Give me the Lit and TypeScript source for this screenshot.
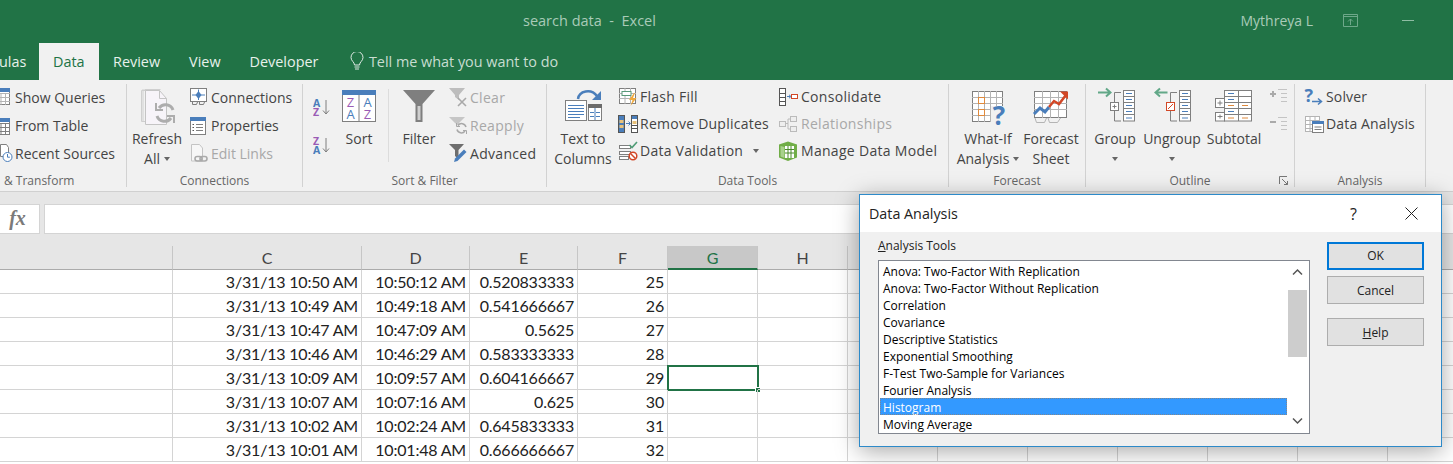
/**
 * Excel 2016 window, Data tab, with the Data Analysis dialog open
 */

import { LitElement, html, svg, css, TemplateResult, SVGTemplateResult } from 'lit'
import { customElement } from 'lit/decorators.js'

const GREY = '#7f7f7f'
const LIGHT = '#b4b4b4'
const BLUE = '#4a7ebb'
const ORANGE = '#e08a3c'
const RED = '#d24726'
const PURPLE = '#9a5bb5'

const ic = (body: SVGTemplateResult, w = 20, h = 20) =>
  html`<svg width=${w} height=${h} viewBox="0 0 ${w} ${h}" fill="none">${body}</svg>`

// small ribbon icons, 20x20
const icons: Record<string, TemplateResult> = {
  showQueries: ic(svg`<rect x="3.5" y="1.5" width="13" height="16" fill="#fff" stroke=${GREY}/><path d="M3 6.5h14M3 10.5h14M3 14.5h14M8 6v12M12.5 6v12" stroke=${LIGHT}/><rect x="3" y="1" width="14" height="4" fill=${BLUE}/>`),
  fromTable: ic(svg`<rect x="3.5" y="3.5" width="13" height="16" fill="#fff" stroke=${GREY}/><path d="M3 8.5h14M3 12.5h14M3 16.5h14M8 8v12M12.5 8v12" stroke=${GREY}/><rect x="3" y="3" width="14" height="4" fill=${BLUE}/>`),
  recentSources: ic(svg`<path d="M7.5 1.5h6l2 3v9h-8z" fill="#fff" stroke=${GREY}/><circle cx="14.5" cy="14" r="4.5" fill="#fff" stroke=${BLUE}/><path d="M14.5 11v3.2h2.4" stroke=${BLUE}/>`),
  connections: ic(svg`<rect x="1.5" y="1.5" width="16" height="13" fill="#fff" stroke=${GREY}/><path d="M9.5 4l3 4-3 4-3-4z" fill=${BLUE}/><path d="M9.5 2.5v3M9.5 10v3M3 8h4M12 8h4" stroke=${BLUE}/><path d="M3.5 15v2.5h4l1-2.5M10.5 15v2.5h4l1-2.5" stroke=${GREY}/>`),
  properties: ic(svg`<rect x="1.5" y="2.5" width="15" height="17" fill="#fff" stroke=${GREY}/><rect x="1" y="2" width="16" height="4" fill=${BLUE}/><path d="M7 9.5h7M7 12.5h7M7 15.5h7" stroke=${GREY}/><path d="M3.5 9.5h1.5M3.5 12.5h1.5M3.5 15.5h1.5" stroke="#555"/>`),
  editLinks: ic(svg`<path d="M2.5 1.5h8l3 3.5v13h-11z" fill="#f7f7f7" stroke="#c4c4c4"/><rect x="6" y="13.5" width="7" height="4.5" rx="2.2" stroke="#aaa" stroke-width="1.6"/><rect x="11" y="13.5" width="7" height="4.5" rx="2.2" stroke="#aaa" stroke-width="1.6"/>`),
  az: ic(svg`<text x="0" y="9.5" class="ict" fill=${BLUE}>A</text><text x="0" y="19" class="ict" fill=${PURPLE}>Z</text><path d="M13 3v14M10 13.5l3 3.5 3-3.5" stroke=${GREY}/>`),
  za: ic(svg`<text x="0" y="9.5" class="ict" fill=${PURPLE}>Z</text><text x="0" y="19" class="ict" fill=${BLUE}>A</text><path d="M13 3v14M10 13.5l3 3.5 3-3.5" stroke=${GREY}/>`),
  clear: ic(svg`<path d="M1 1h16l-6 7v5l-4-3V8z" fill="#bdbdbd"/><path d="M10 11l8 8M18 11l-8 8" stroke="#a8a8a8" stroke-width="1.6"/>`),
  reapply: ic(svg`<path d="M1 2h16l-6 6v3l-4-3V8z" fill="#c6c6c6"/><path d="M18 12a4.5 4.5 0 0 0-8-1.5M9 14.5a4.5 4.5 0 0 0 8 1.5" stroke="#a8a8a8" stroke-width="1.5"/><path d="M8.5 8v3.5H12M18.5 19v-3.5H15" stroke="#a8a8a8"/>`),
  advanced: ic(svg`<path d="M1 1h15l-5.5 6v9L7 13V7z" fill="#6e6e6e"/><path d="M6 19l1-3.5 9-9 2.5 2.5-9 9z" fill=${BLUE}/>`),
  flashFill: ic(svg`<rect x="1.5" y="1.5" width="16" height="15" fill="#fff" stroke=${GREY}/><path d="M1 6.5h17M1 11.5h17M7 1v16M12.5 1v16" stroke=${LIGHT}/><rect x="4" y="4.5" width="9" height="4" fill="#fff" stroke="#5a9a78"/><path d="M16 6l-5 7h3.5l-2 6 6-8h-3.5l2-5z" fill="#f0a93c"/>`),
  removeDup: ic(svg`<rect x="0.5" y="1.5" width="6" height="17" fill=${BLUE} stroke="#555"/><rect x="1.5" y="6" width="4" height="3" fill="#e8c17a"/><rect x="1.5" y="11" width="4" height="3" fill="#e8c17a"/><rect x="13.5" y="1.5" width="6" height="17" fill="#fff" stroke="#555"/><rect x="14" y="2" width="5" height="3" fill=${BLUE}/><rect x="14.5" y="7" width="4" height="3" fill="#e8c17a"/><path d="M14 11.5h5M14 14.5h5" stroke="#555"/><path d="M8 9.5h4M10.5 7.5l2 2-2 2" stroke=${BLUE}/>`),
  validation: ic(svg`<rect x="1.5" y="4.5" width="11" height="3" fill="#fff" stroke=${GREY}/><rect x="1.5" y="10.5" width="11" height="3" fill="#fff" stroke=${GREY}/><rect x="1.5" y="15.5" width="9" height="3" fill="#fff" stroke=${GREY}/><path d="M11.5 4l2.5 2.5 5-5.5" stroke="#4f9c76" stroke-width="1.6"/><circle cx="15" cy="15" r="3.8" fill="#fff" stroke=${RED} stroke-width="1.5"/><path d="M12.5 12.5l5 5" stroke=${RED} stroke-width="1.5"/>`),
  consolidate: ic(svg`<rect x="1.5" y="1.5" width="6" height="17" fill="#fff" stroke="#555"/><path d="M2 6.5h5M2 10.5h5M2 14.5h5" stroke="#555"/><path d="M9 9.5h3M11 7.8l2 1.7-2 1.7" stroke=${BLUE}/><rect x="13.5" y="7.5" width="6" height="4" fill="#fff" stroke=${RED}/>`),
  relationships: ic(svg`<rect x="1.5" y="7.5" width="6" height="5" fill="#eee" stroke="#bbb"/><rect x="12.5" y="2.5" width="6" height="5" fill="#eee" stroke="#bbb"/><rect x="12.5" y="12.5" width="6" height="5" fill="#eee" stroke="#bbb"/><path d="M7 9.5h3V5h3M10 9.5V15h3" stroke="#bbb"/>`),
  dataModel: ic(svg`<path d="M10 0.5l9 3v13l-9 3.5-9-3.5v-13z" fill="#70ad47"/><path d="M7 5h9v12H7z" fill="#fff"/><path d="M7 8.5h9M7 12h9M10 5v12M13 5v12" stroke="#4b8a2a"/><path d="M2.5 5l4 1v11l-4-1.5z" fill="#a9d18e"/>`),
  solver: ic(svg`<text x="0.5" y="15" class="icq" fill=${BLUE}>?</text><path d="M8 14.500h9M14 11.500l3.500 3-3.500 3" stroke=${BLUE} stroke-width="1.5"/>`),
  dataAnalysis: ic(svg`<rect x="1.5" y="2.5" width="14" height="15" fill="#fff" stroke=${LIGHT}/><path d="M1 6.5h15M1 10.5h15M1 14.5h15M6 2v16M11 2v16" stroke=${LIGHT}/><rect x="8.5" y="7.5" width="11" height="11" fill="#fff" stroke=${GREY}/><rect x="8" y="7" width="12" height="3" fill=${BLUE}/><path d="M10.5 13h7M10.5 15.5h7" stroke=${GREY}/>`),
  launcher: ic(svg`<path d="M0.5 8V0.5H8M3 3l5.5 5.5M5 8.5h3.5V5" stroke="#777"/>`, 10, 10),
  showDetail: ic(svg`<path d="M1 7h6M4 4v6" stroke="#aaa" stroke-width="2"/><path d="M9 2.5h9M12 6.5h6M12 10.5h6M12 14.5h6" stroke="#c4c4c4"/>`, 20, 18),
  hideDetail: ic(svg`<path d="M1 7h6" stroke="#aaa" stroke-width="2"/><path d="M9 2.5h9M12 6.5h6M12 10.5h6M12 14.5h6" stroke="#c4c4c4"/>`, 20, 18),
}

// large ribbon icons, drawn in a 40x42 box
const big = (body: SVGTemplateResult) => ic(body, 40, 42)

// the column of rows shared by the Group and Ungroup icons
const outlineCol = (x: number) => svg`
  <rect x=${x + 0.5} y="3.500" width="11" height="30.500" fill="#fff" stroke=${GREY}/>
  <path d="M${x} 9.500h12M${x} 15.500h12M${x} 21.500h12M${x} 27.500h12" stroke=${GREY}/>
  <path d="M${x + 3} 6.500h6M${x + 3} 12.500h6M${x + 3} 18.500h6M${x + 3} 24.500h6M${x + 3} 31h6" stroke=${BLUE}/>
`

const bigIcons: Record<string, TemplateResult> = {
  refresh: big(svg`<path d="M4.5 3.5h16v31h-16zM7.5 2.5h16M6 2v32" stroke="#cfcfcf"/><path d="M8.5 3.5h14l7 8v26h-21z" fill="#f7f4f9" stroke="#c4c4c4"/><path d="M22.5 3.5v8h7" stroke="#c4c4c4"/><path d="M36 23a8 8 0 0 0-14-2M20 29a8 8 0 0 0 14 2" stroke="#adadad" stroke-width="3"/><path d="M19 16v7h7M37 36v-7h-7" stroke="#adadad" stroke-width="2"/>`),
  sort: big(svg`<rect x="3.5" y="3.5" width="33" height="31" fill="#fff" stroke=${GREY}/><rect x="3" y="3" width="34" height="5" fill=${BLUE}/><path d="M20 8v26" stroke=${GREY}/><text x="11.5" y="20" class="icl" fill=${PURPLE}>Z</text><text x="11.5" y="32" class="icl" fill=${BLUE}>A</text><text x="28.5" y="20" class="icl" fill=${BLUE}>A</text><text x="28.5" y="32" class="icl" fill=${PURPLE}>Z</text>`),
  filter: big(svg`<path d="M4 3h32L23.5 17v18h-7V17z" fill="#7f7f7f"/><path d="M18.5 19v14h3V19z" fill="#cfcfcf"/>`),
  textToCols: big(svg`<rect x="2.5" y="13.5" width="21" height="20" fill="#fff" stroke=${GREY}/><path d="M5 18.5h16M5 21.5h16M5 24.5h16M5 27.5h16M5 30.5h12" stroke=${BLUE}/><rect x="25.5" y="17.5" width="13" height="16" fill="#fff" stroke=${GREY}/><rect x="25" y="17" width="14" height="4" fill="#6b6b6b"/><path d="M32 21v12M27 25.5h4M33 25.5h4M27 29.5h4M33 29.5h4" stroke=${BLUE}/><path d="M15 12c1-8 13-11 19-3" stroke=${BLUE} stroke-width="2.5"/><path d="M38 4v9h-9z" fill=${BLUE}/>`),
  whatIf: big(svg`<rect x="4.5" y="4.5" width="30" height="30" fill="#fff" stroke=${GREY}/><path d="M4 10.5h31M4 16.5h31M4 22.5h31M4 28.5h31M10.5 4v31M16.5 4v31M22.5 4v31M28.5 4v31" stroke=${LIGHT}/><rect x="10.5" y="10.5" width="6" height="6" fill="#fff" stroke=${ORANGE}/><rect x="10.5" y="22.5" width="6" height="6" fill="#fff" stroke=${ORANGE}/><rect x="23" y="19" width="16" height="21" fill="#f1f1f1"/><text x="31" y="38" class="icw" fill=${BLUE}>?</text>`),
  forecast: big(svg`<rect x="3.5" y="4.5" width="32" height="26" fill="#fff" stroke=${GREY}/><path d="M3 10.5h33M3 16.5h33M3 22.5h33M11.5 4v27M19.5 4v27M27.5 4v27" stroke=${LIGHT}/><path d="M3 27l6-6 5 4 4-5" stroke=${BLUE} stroke-width="3"/><path d="M18 20l5-6 5 3 7-9" stroke=${RED} stroke-width="2.5"/><path d="M29 4.5h8v8z" fill=${RED}/><path d="M4 31l1.5 4.5h8l2-4.5M17 31l1.5 4.5h8l3-4.5" stroke=${LIGHT}/>`),
  group: big(svg`<path d="M3 5.500h12M11 1.500l4.500 4-4.500 4" stroke="#62a888" stroke-width="2"/><path d="M26 5.500h-6.500v10M19.500 23.500v10.500H26" stroke=${GREY}/><rect x="15.500" y="15.500" width="8" height="8" fill="#fff" stroke=${GREY}/><path d="M17.500 19.500h4M19.500 17.500v4" stroke=${GREY}/>${outlineCol(28)}`),
  ungroup: big(svg`<path d="M15.500 5.500H4M8 1.500l-4.500 4 4.500 4" stroke="#62a888" stroke-width="2"/><path d="M25 5.500h-6.500v10M18.500 23.500v10.500H25" stroke=${GREY}/><rect x="14.500" y="15.500" width="8" height="8" fill="#fff" stroke=${RED}/><path d="M16 22l5-5" stroke=${RED}/>${outlineCol(27)}`),
  subtotal: big(svg`<rect x="10.500" y="3.500" width="27" height="30.500" fill="#fff" stroke=${GREY}/><path d="M10 9.500h28M10 15.500h28M10 21.500h28M10 27.500h28M24.500 3v31" stroke=${GREY}/><path d="M14 6.500h6M14 12.500h6M14 24.500h6" stroke=${BLUE}/><path d="M14 18.500h6M28 18.500h6M14 31h6M28 31h6" stroke=${ORANGE}/><rect x="1.500" y="11.500" width="9" height="9" fill="#fff" stroke=${GREY}/><path d="M3.500 16h5M6 13.500v5" stroke=${GREY}/><rect x="1.500" y="25.500" width="9" height="8.500" fill="#fff" stroke=${GREY}/><path d="M3.500 29.500h5M6 27.500v4" stroke=${GREY}/>`),
}

const sm = (icon: string, label: string, off = false, caret = false) => html`
  <div class="sm ${off ? 'off' : ''}">
    <span class="ico">${icons[icon]}</span>
    <span>${label}</span>
    ${caret ? html`<i class="caret far"></i>` : ''}
  </div>
`

const lg = (icon: string, cls: string, line1: string, line2: string | TemplateResult = '') => html`
  <div class="lg ${cls}">
    <span class="lgico">${bigIcons[icon]}</span>
    <span class="line">${line1}</span>
    <span class="line">${line2}</span>
  </div>
`

const rows = [
  ['3/31/13 10:50 AM', '10:50:12 AM', '0.520833333', '25'],
  ['3/31/13 10:49 AM', '10:49:18 AM', '0.541666667', '26'],
  ['3/31/13 10:47 AM', '10:47:09 AM', '0.5625', '27'],
  ['3/31/13 10:46 AM', '10:46:29 AM', '0.583333333', '28'],
  ['3/31/13 10:09 AM', '10:09:57 AM', '0.604166667', '29'],
  ['3/31/13 10:07 AM', '10:07:16 AM', '0.625', '30'],
  ['3/31/13 10:02 AM', '10:02:24 AM', '0.645833333', '31'],
  ['3/31/13 10:01 AM', '10:01:48 AM', '0.666666667', '32'],
]

const tools = [
  'Anova: Two-Factor With Replication',
  'Anova: Two-Factor Without Replication',
  'Correlation',
  'Covariance',
  'Descriptive Statistics',
  'Exponential Smoothing',
  'F-Test Two-Sample for Variances',
  'Fourier Analysis',
  'Histogram',
  'Moving Average',
]

const HEADS = ['', 'C', 'D', 'E', 'F', 'G', 'H', '', '', '', '', '', '', '', '', '']

@customElement('app-root')
export class AppRoot extends LitElement {
  static styles = css`
    :host {
      display: block;
      position: relative;
      width: 1453px;
      height: 464px;
      overflow: hidden;
      background: #fff;
      font-family: 'Open Sans', 'Noto Sans', sans-serif;
      color: #444;
    }

    /* title bar and tabs */
    .titlebar {
      display: flex;
      align-items: center;
      height: 43px;
      padding-bottom: 3px;
      box-sizing: border-box;
      background: #217346;
      color: #a9cbb8;
      font-size: 14.5px;
    }
    .doc { margin-left: 523px; white-space: pre; }
    .user { margin-left: auto; font-size: 14px; }
    .restore { margin-left: 30px; display: flex; }
    .minimize { margin: 0 39px 0 44px; display: flex; }

    .tabs {
      display: flex;
      align-items: center;
      height: 37px;
      background: #217346;
      color: #e8f1ec;
      font-size: 14.4px;
    }
    .tab { padding: 0 14.5px; line-height: 37px; }
    .tab.clip { padding: 0; margin-left: -1px; width: 40px; }
    .tab.active { background: #f1f1f1; color: #217346; padding: 0 14px; }
    .tell { display: flex; align-items: center; gap: 5px; margin-left: 17px; color: #c8ddd1; }

    /* ribbon */
    .ribbon {
      display: flex;
      height: 112px;
      padding: 4px 0;
      box-sizing: border-box;
      background: #f1f1f1;
      border-bottom: 1px solid #d0d0d0;
      font-size: 14px;
      white-space: nowrap;
    }
    .group {
      position: relative;
      display: flex;
      flex-direction: column;
      flex: none;
      box-sizing: border-box;
      border-right: 1px solid #d2d2d2;
    }
    .g1 { width: 127px; }
    .g2 { width: 176px; }
    .g3 { width: 244px; }
    .g4 { width: 402px; }
    .g5 { width: 137px; }
    .g6 { width: 209px; }
    .g7 { width: 131px; }

    .body { display: flex; height: 91px; flex: none; }
    .label {
      height: 12px;
      line-height: 12px;
      font-size: 12px;
      text-align: center;
      color: #666;
    }
    .g1 .label { text-align: left; padding-left: 4px; }

    .col { display: flex; flex-direction: column; margin-top: -1px; }
    .col .sm { height: 28px; }
    .tight .sm { height: 27px; }
    .sm { display: flex; align-items: center; gap: 2px; }
    .sm.off { color: #a8a8a8; }
    .ico { display: flex; width: 20px; height: 20px; flex: none; }

    .lg { display: flex; flex-direction: column; align-items: center; flex: none; }
    .lgico { display: flex; height: 42px; margin-top: 3px; }
    .line { height: 20px; line-height: 20px; display: flex; align-items: center; gap: 4px; }

    .caret {
      display: inline-block;
      width: 0;
      height: 0;
      border: 3.5px solid transparent;
      border-top: 4px solid #666;
      border-bottom: 0;
    }
    .caret.far { margin-left: 8px; }

    .ict { font: bold 10.5px 'Open Sans', sans-serif; }
    .icl { font: 13px 'Open Sans', sans-serif; text-anchor: middle; }
    .icq { font: bold 18px 'Open Sans', sans-serif; }
    .icw { font: bold 26px 'Open Sans', sans-serif; text-anchor: middle; }

    .g1 .col { margin-left: -7px; }
    .refresh { width: 48px; margin-left: 6px; }
    .g2 .col { margin-left: 8px; }
    .azcol { display: flex; flex-direction: column; gap: 18px; margin: 13px 0 0 10px; }
    .sortbtn { width: 40px; margin-left: 6px; }
    .vsep { width: 1px; height: 73px; margin: 5px 0 0 9px; background: #dcdcdc; }
    .filterbtn { width: 40px; margin-left: 10px; }
    .g3 .col { margin-left: 9px; letter-spacing: 0.3px; }
    .ttc { width: 60px; margin-left: 6px; }
    .g4 .col { margin-left: 5px; width: 160px; letter-spacing: 0.25px; }
    .g4 .col + .col { margin-left: 0; letter-spacing: 0.3px; }
    .g4 .col + .col .sm { gap: 3px; }
    .whatif { width: 64px; margin-left: 7px; }
    .forecast { width: 62px; }
    .groupbtn { width: 46px; margin-left: 6px; }
    .ungroup { width: 62px; margin-left: 3px; }
    .subtotal { width: 60px; margin-left: 1px; }
    .detail { display: flex; flex-direction: column; gap: 10px; margin: 3px 0 0 5px; }
    .g7 .col { margin-left: 9px; letter-spacing: 0.15px; }
    .launcher { position: absolute; right: 5px; bottom: 1px; display: flex; }

    /* formula bar */
    .formula {
      display: flex;
      gap: 4px;
      height: 43px;
      padding: 12px 0 1px;
      box-sizing: border-box;
      background: #e6e6e6;
    }
    .fx {
      width: 40px;
      height: 30px;
      padding-right: 4px;
      box-sizing: border-box;
      background: #fff;
      border: 1px solid #d4d4d4;
      border-left: 0;
      font: italic bold 20px/26px 'Liberation Serif', serif;
      color: #7a7a7a;
      text-align: center;
    }
    .finput {
      flex: 1;
      height: 30px;
      box-sizing: border-box;
      background: #fff;
      border: 1px solid #d4d4d4;
      border-right: 0;
    }
    .gap { height: 11px; background: #e6e6e6; }

    /* sheet */
    .sheet {
      display: grid;
      grid-template-columns: 173px 189px 108px 108px repeat(12, 90px);
      font-family: 'Lato', 'Open Sans', sans-serif;
      font-size: 16px;
      letter-spacing: -0.2px;
      color: #222;
    }
    .hd {
      height: 24px;
      box-sizing: border-box;
      background: #e6e6e6;
      border-right: 1px solid #c6c6c6;
      border-bottom: 1px solid #ababab;
      text-align: center;
      line-height: 23px;
      color: #444;
    }
    .hd.sel {
      background: #c8c8c8;
      border-bottom: 2px solid #217346;
      color: #217346;
    }
    .cell {
      position: relative;
      height: 24px;
      box-sizing: border-box;
      border-right: 1px solid #d4d4d4;
      border-bottom: 1px solid #d4d4d4;
      padding-right: 3px;
      text-align: right;
      line-height: 23px;
      white-space: nowrap;
    }
    .cursor {
      position: absolute;
      inset: -1px -2px -2px -1px;
      border: 2px solid #217346;
    }
    .handle {
      position: absolute;
      right: -4px;
      bottom: -4px;
      width: 6px;
      height: 6px;
      background: #217346;
      border: 1px solid #fff;
      box-sizing: border-box;
    }

    /* dialog */
    .dialog {
      position: absolute;
      left: 859px;
      top: 194px;
      width: 583px;
      height: 253px;
      box-sizing: border-box;
      background: #f0f0f0;
      border: 1px solid #2d8ac9;
      box-shadow: 0 4px 22px rgba(0, 0, 0, 0.35);
      color: #000;
    }
    .dtitle {
      display: flex;
      align-items: center;
      height: 37px;
      padding-left: 9px;
      background: #fff;
      font-size: 14.3px;
      color: #222;
    }
    .q { margin-left: auto; font-size: 16px; }
    .x { display: flex; margin: 0 23px 0 48px; }
    .dbody {
      display: flex;
      padding: 5px 17px 0 18px;
      gap: 17px;
      font-size: 12px;
    }
    .dleft { width: 432px; }
    .dlabel { height: 23px; line-height: 17px; color: #222; }
    .list {
      display: flex;
      height: 174px;
      box-sizing: border-box;
      background: #fff;
      border: 1px solid #828790;
    }
    .items { flex: 1; padding: 1px 1px 0 1px; overflow: hidden; }
    .item { height: 17px; line-height: 19px; padding-left: 3px; white-space: nowrap; }
    .item.sel {
      background: #3399ff;
      color: #fff;
      outline: 1px dotted rgba(190, 120, 50, 0.55);
      outline-offset: -1px;
    }
    .scroll {
      display: flex;
      flex-direction: column;
      align-items: center;
      width: 19px;
      margin-right: 2px;
      flex: none;
    }
    .chev { display: flex; margin-top: 6px; }
    .thumb { width: 19px; height: 67px; margin-top: 13px; background: #cdcdcd; flex: none; }
    .chev.down { margin-top: 59px; }
    .btns { display: flex; flex-direction: column; width: 97px; padding-top: 5px; }
    .btn {
      height: 28px;
      box-sizing: border-box;
      background: #e1e1e1;
      border: 1px solid #adadad;
      text-align: center;
      line-height: 27px;
      color: #222;
    }
    .btn.def { border: 2px solid #0078d7; line-height: 24px; }
    .btn + .btn { margin-top: 6px; }
    .btn.help { margin-top: 14px; }
  `

  private renderRibbon() {
    return html`
      <div class="ribbon">
        <section class="group g1">
          <div class="body">
            <div class="col">
              ${sm('showQueries', 'Show Queries')}
              ${sm('fromTable', 'From Table')}
              ${sm('recentSources', 'Recent Sources')}
            </div>
          </div>
          <div class="label">&amp; Transform</div>
        </section>
        <section class="group g2">
          <div class="body">
            ${lg('refresh', 'refresh', 'Refresh', html`All <i class="caret"></i>`)}
            <div class="col">
              ${sm('connections', 'Connections')}
              ${sm('properties', 'Properties')}
              ${sm('editLinks', 'Edit Links', true)}
            </div>
          </div>
          <div class="label">Connections</div>
        </section>
        <section class="group g3">
          <div class="body">
            <div class="azcol">
              <span class="ico">${icons.az}</span>
              <span class="ico">${icons.za}</span>
            </div>
            ${lg('sort', 'sortbtn', 'Sort')}
            <div class="vsep"></div>
            ${lg('filter', 'filterbtn', 'Filter')}
            <div class="col">
              ${sm('clear', 'Clear', true)}
              ${sm('reapply', 'Reapply', true)}
              ${sm('advanced', 'Advanced')}
            </div>
          </div>
          <div class="label">Sort &amp; Filter</div>
        </section>
        <section class="group g4">
          <div class="body">
            ${lg('textToCols', 'ttc', 'Text to', 'Columns')}
            <div class="col tight">
              ${sm('flashFill', 'Flash Fill')}
              ${sm('removeDup', 'Remove Duplicates')}
              ${sm('validation', 'Data Validation', false, true)}
            </div>
            <div class="col tight">
              ${sm('consolidate', 'Consolidate')}
              ${sm('relationships', 'Relationships', true)}
              ${sm('dataModel', 'Manage Data Model')}
            </div>
          </div>
          <div class="label">Data Tools</div>
        </section>
        <section class="group g5">
          <div class="body">
            ${lg('whatIf', 'whatif', 'What-If', html`Analysis <i class="caret"></i>`)}
            ${lg('forecast', 'forecast', 'Forecast', 'Sheet')}
          </div>
          <div class="label">Forecast</div>
        </section>
        <section class="group g6">
          <div class="body">
            ${lg('group', 'groupbtn', 'Group', html`<i class="caret"></i>`)}
            ${lg('ungroup', 'ungroup', 'Ungroup', html`<i class="caret"></i>`)}
            ${lg('subtotal', 'subtotal', 'Subtotal')}
            <div class="detail">
              ${icons.showDetail}
              ${icons.hideDetail}
            </div>
          </div>
          <div class="label">Outline</div>
          <span class="launcher">${icons.launcher}</span>
        </section>
        <section class="group g7">
          <div class="body">
            <div class="col tight">
              ${sm('solver', 'Solver')}
              ${sm('dataAnalysis', 'Data Analysis')}
            </div>
          </div>
          <div class="label">Analysis</div>
        </section>
      </div>
    `
  }

  private renderSheet() {
    // row label area, the four data columns, the cursor column, then empty cells
    const blanks = HEADS.slice(6)
    return html`
      <div class="sheet">
        ${HEADS.map((h) => html`<div class="hd ${h === 'G' ? 'sel' : ''}">${h}</div>`)}
        ${rows.map(
          (r, i) => html`
            <div class="cell"></div>
            ${r.map((v) => html`<div class="cell">${v}</div>`)}
            <div class="cell">
              ${i === 4 ? html`<div class="cursor"><div class="handle"></div></div>` : ''}
            </div>
            ${blanks.map(() => html`<div class="cell"></div>`)}
          `,
        )}
      </div>
    `
  }

  private renderDialog() {
    return html`
      <div class="dialog">
        <div class="dtitle">
          <span>Data Analysis</span>
          <span class="q">?</span>
          <span class="x">
            <svg width="13" height="13" viewBox="0 0 13 13"><path d="M0.5 0.5l12 12M12.5 0.5l-12 12" stroke="#222" fill="none"/></svg>
          </span>
        </div>
        <div class="dbody">
          <div class="dleft">
            <div class="dlabel"><u>A</u>nalysis Tools</div>
            <div class="list">
              <div class="items">
                ${tools.map((t) => html`<div class="item ${t === 'Histogram' ? 'sel' : ''}">${t}</div>`)}
              </div>
              <div class="scroll">
                <span class="chev"><svg width="11" height="10" viewBox="0 0 11 10"><path d="M1 7.5l4.5-4.5 4.5 4.5" stroke="#555" stroke-width="1.5" fill="none"/></svg></span>
                <div class="thumb"></div>
                <span class="chev down"><svg width="11" height="10" viewBox="0 0 11 10"><path d="M1 2.5l4.5 4.5 4.5-4.5" stroke="#555" stroke-width="1.5" fill="none"/></svg></span>
              </div>
            </div>
          </div>
          <div class="btns">
            <div class="btn def">OK</div>
            <div class="btn">Cancel</div>
            <div class="btn help"><u>H</u>elp</div>
          </div>
        </div>
      </div>
    `
  }

  render() {
    return html`
      <div class="titlebar">
        <span class="doc">search data  -  Excel</span>
        <span class="user">Mythreya L</span>
        <span class="restore">
          <svg width="15" height="13" viewBox="0 0 15 13" fill="none"><path d="M0.5 0.5h14v12H0.5zM0.5 2.5h14M7.5 11V5M5 7.5l2.5-2.5 2.5 2.5" stroke="#6ea88a"/></svg>
        </span>
        <span class="minimize">
          <svg width="12" height="1" viewBox="0 0 12 1"><path d="M0 0.5h12" stroke="#8fbda4"/></svg>
        </span>
      </div>
      <div class="tabs">
        <span class="tab clip">ulas</span>
        <span class="tab active">Data</span>
        <span class="tab">Review</span>
        <span class="tab">View</span>
        <span class="tab">Developer</span>
        <span class="tell">
          <svg width="14" height="19" viewBox="0 0 14 19" fill="none"><path d="M4.5 13c0-3-3.5-4-3.5-7.5a6 6 0 0 1 12 0c0 3.5-3.5 4.5-3.5 7.5z" stroke="#dfeae4"/><path d="M4.5 15h5M5 17h4" stroke="#dfeae4"/></svg>
          Tell me what you want to do
        </span>
      </div>
      ${this.renderRibbon()}
      <div class="formula">
        <div class="fx">fx</div>
        <div class="finput"></div>
      </div>
      <div class="gap"></div>
      ${this.renderSheet()}
      ${this.renderDialog()}
    `
  }
}

declare global {
  interface HTMLElementTagNameMap {
    'app-root': AppRoot
  }
}
